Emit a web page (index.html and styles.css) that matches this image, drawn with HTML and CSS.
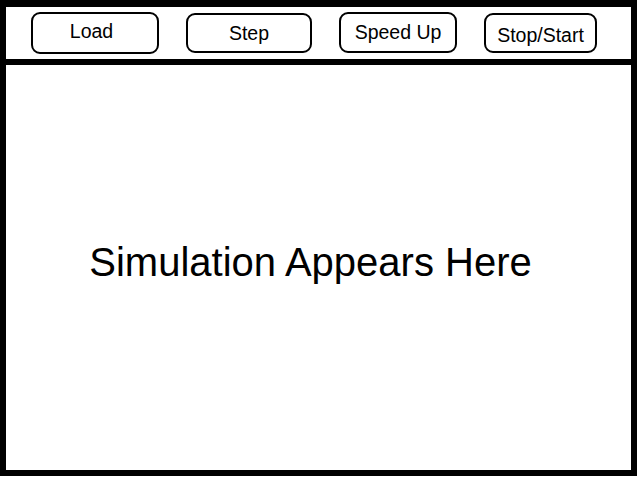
FILE: index.html
```html
<!DOCTYPE html>
<html>
<head>
<meta charset="utf-8">
<link rel="stylesheet" href="styles.css">
</head>
<body>
<div class="frame">
  <div class="toolbar">
    <div class="btn btn-load">Load</div>
    <div class="btn btn-step">Step</div>
    <div class="btn btn-speed">Speed Up</div>
    <div class="btn btn-stop">Stop/Start</div>
  </div>
  <div class="stage">
    <div class="stage-label">Simulation Appears Here</div>
  </div>
</div>
</body>
</html>
```

FILE: styles.css
```css
html, body {
  margin: 0;
  padding: 0;
  background: #fff;
}
body {
  font-family: "Liberation Sans", Arial, sans-serif;
  color: #000;
}
.frame {
  box-sizing: border-box;
  width: 637px;
  height: 476px;
  border: 6px solid #000;
  border-top-width: 7px;
  display: flex;
  flex-direction: column;
}
.toolbar {
  box-sizing: border-box;
  height: 58px;
  border-bottom: 6px solid #000;
  display: flex;
  align-items: flex-start;
  padding-left: 25px;
  gap: 27px;
}
.btn {
  box-sizing: border-box;
  border: 2px solid #000;
  border-radius: 9px;
  font-size: 19.5px;
  line-height: 1;
  text-align: center;
  white-space: nowrap;
}
.btn-load {
  width: 128px;
  height: 42px;
  margin-top: 5px;
  padding-top: 8px;
  padding-right: 7px;
}
.btn-step {
  width: 126px;
  height: 40px;
  margin-top: 6px;
  padding-top: 9px;
}
.btn-speed {
  width: 118px;
  height: 41px;
  margin-top: 5px;
  padding-top: 9px;
}
.btn-stop {
  width: 113px;
  height: 40px;
  margin-top: 6px;
  padding-top: 11px;
}
.stage {
  flex: 1;
  display: flex;
  align-items: center;
  justify-content: center;
  padding-right: 16px;
  padding-bottom: 12px;
}
.stage-label {
  font-size: 40px;
  line-height: 1;
}
```
